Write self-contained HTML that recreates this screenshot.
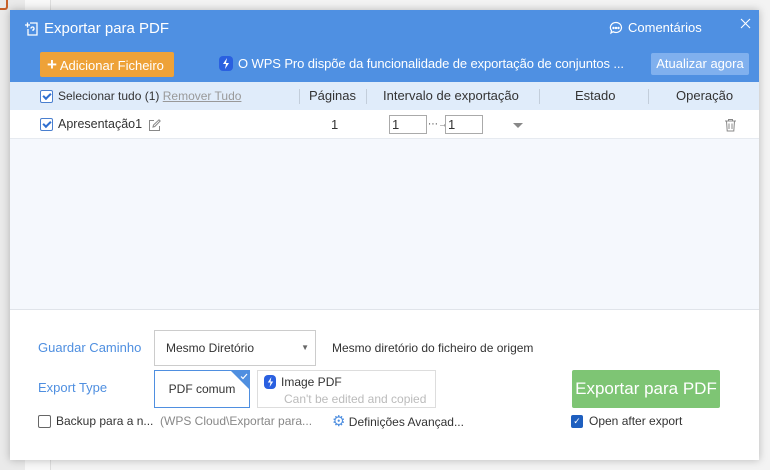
<!DOCTYPE html>
<html><head><meta charset="utf-8"><style>
*{margin:0;padding:0;box-sizing:border-box}
body{width:770px;height:470px;background:#f3f3f3;font-family:"Liberation Sans","DejaVu Sans",sans-serif;position:relative;overflow:hidden;font-size:13px;color:#333}
.abs{position:absolute;white-space:nowrap}
.dlg{left:10px;top:10px;width:749px;height:450px;background:#fff;box-shadow:0 0 8px rgba(0,0,0,.25)}
.hdr{left:0;top:0;width:749px;height:72px;background:#4f90e2;color:#fff}
.cb{width:13px;height:13px;border:1px solid #4a7fcf;border-radius:2px;background:#fff;display:inline-block}
.cb.on::after{content:"";display:block;width:6px;height:3px;border-left:2px solid #2f6fd0;border-bottom:2px solid #2f6fd0;transform:rotate(-45deg);margin:2px 0 0 2px}
.th{top:72px;height:28px;width:749px;background:#e0ecfa;line-height:28px}
.sep{top:7px;width:1px;height:15px;background:#c3cedb}
</style></head><body>
<div class="abs" style="left:0;top:0;width:25px;height:470px;background:#eaeaea"></div>
<div class="abs" style="left:25px;top:0;width:26px;height:470px;background:#f8f8f8;border-right:1px solid #ddd"></div>
<div class="abs" style="left:0;top:0;width:8px;height:10px;border-right:2px solid #c8602a;border-bottom:2px solid #c8602a;border-radius:0 0 3px 0"></div>
<div class="abs dlg">
 <div class="abs hdr">
  <svg class="abs" style="left:14px;top:11px" width="16" height="16" viewBox="0 0 16 16" fill="none" stroke="#fff" stroke-width="1.3"><path d="M6 2h7v12H4V8"/><path d="M1 4h5M3.5 1.5v5"/><path d="M7 7.5a1.5 1.5 0 1 1 2 1.4V10"/></svg>
  <div class="abs" style="left:34px;top:10px;font-size:15px">Exportar para PDF</div>
  <svg class="abs" style="left:599px;top:11px" width="14" height="14" viewBox="0 0 14 14" fill="none" stroke="#fff" stroke-width="1.2"><path d="M7 1.5a5.5 5 0 1 1-3 9.2L2 12l.5-2.5A5.5 5 0 0 1 7 1.5z"/><circle cx="4.5" cy="7" r=".6" fill="#fff"/><circle cx="7" cy="7" r=".6" fill="#fff"/><circle cx="9.5" cy="7" r=".6" fill="#fff"/></svg>
  <div class="abs" style="left:618px;top:10px;font-size:13px">Comentários</div>
  <svg class="abs" style="left:730px;top:8px" width="11" height="11" viewBox="0 0 11 11" stroke="#fff" stroke-width="1.1"><path d="M1 1l9 9M10 1l-9 9"/></svg>
  <div class="abs" style="left:30px;top:42px;width:134px;height:25px;background:#eea238;border-radius:2px;font-size:13px;line-height:25px;padding-left:7px"><b style="font-size:17px">+</b> Adicionar Ficheiro</div>
  <div class="abs" style="left:209px;top:46px;width:14px;height:15px;background:#2a60e0;border-radius:4px"></div>
  <svg class="abs" style="left:211px;top:48px" width="10" height="11" viewBox="0 0 10 11"><path d="M6 0L2 6h3l-1 5 4-6H5z" fill="#fff"/></svg>
  <div class="abs" style="left:228px;top:46px;font-size:13px;letter-spacing:-0.1px">O WPS Pro dispõe da funcionalidade de exportação de conjuntos ...</div>
  <div class="abs" style="left:641px;top:43px;width:98px;height:22px;background:#80b0ee;border-radius:2px;text-align:center;line-height:22px">Atualizar agora</div>
 </div>
 <div class="abs th">
  <span class="abs cb on" style="left:30px;top:8px"></span>
  <span class="abs" style="left:48px;font-size:12px">Selecionar tudo (1) <u style="color:#999">Remover Tudo</u></span>
  <div class="abs sep" style="left:289px"></div>
  <span class="abs" style="left:299px">Páginas</span>
  <div class="abs sep" style="left:356px"></div>
  <span class="abs" style="left:373px">Intervalo de exportação</span>
  <div class="abs sep" style="left:529px"></div>
  <span class="abs" style="left:565px">Estado</span>
  <div class="abs sep" style="left:638px"></div>
  <span class="abs" style="left:666px">Operação</span>
 </div>
 <div class="abs" style="left:0;top:100px;width:749px;height:200px;background:#f5f8fd;border-bottom:1px solid #e0e4ea">
  <div class="abs" style="left:0;top:0;width:749px;height:29px;background:#fff;border-bottom:1px solid #e6eaf0;line-height:29px">
   <span class="abs cb on" style="left:30px;top:8px"></span>
   <span class="abs" style="left:48px;font-size:12.5px">Apresentação1</span>
   <svg class="abs" style="left:138px;top:9px" width="13" height="13" viewBox="0 0 13 13" fill="none" stroke="#888" stroke-width="1"><path d="M6 1.5H1.5v10h10V7"/><path d="M5 8l.5-2L11 .8l1.2 1.2L6.8 7.5z"/></svg>
   <span class="abs" style="left:321px">1</span>
   <span class="abs" style="left:379px;top:5px;width:38px;height:19px;border:1px solid #aaa;line-height:17px;padding-left:2px">1</span>
   <span class="abs" style="left:418px;font-size:10px;color:#555">⋯→</span>
   <span class="abs" style="left:435px;top:5px;width:38px;height:19px;border:1px solid #aaa;line-height:17px;padding-left:2px">1</span>
   <div class="abs" style="left:503px;top:13px;width:0;height:0;border-left:5px solid transparent;border-right:5px solid transparent;border-top:5px solid #888"></div>
   <svg class="abs" style="left:714px;top:8px" width="13" height="14" viewBox="0 0 13 14" fill="none" stroke="#888" stroke-width="1"><path d="M1 3h11M4.5 3V1.5h4V3M2.5 3l.7 10h6.6l.7-10M5 5.5v5.5M8 5.5v5.5"/></svg>
  </div>
 </div>
 <div class="abs" style="left:28px;top:330px;color:#4f8fe0">Guardar Caminho</div>
 <div class="abs" style="left:144px;top:320px;width:162px;height:36px;border:1px solid #ccc;line-height:34px;padding-left:11px;font-size:12px">Mesmo Diretório<span style="position:absolute;right:6px;font-size:8px;color:#666">▼</span></div>
 <div class="abs" style="left:322px;top:331px;font-size:12px">Mesmo diretório do ficheiro de origem</div>
 <div class="abs" style="left:28px;top:370px;color:#4f8fe0">Export Type</div>
 <div class="abs" style="left:144px;top:360px;width:96px;height:38px;border:1px solid #4f8fe0;line-height:36px;text-align:center;font-size:12px">PDF comum
  <div class="abs" style="right:0;top:0;width:0;height:0;border-top:18px solid #4f8fe0;border-left:18px solid transparent"></div>
  <svg class="abs" style="right:1px;top:2px" width="8" height="7" viewBox="0 0 8 7" fill="none" stroke="#fff" stroke-width="1.2"><path d="M1 3.5l2 2L7 1"/></svg></div>
 <div class="abs" style="left:247px;top:360px;width:179px;height:38px;border:1px solid #ddd;font-size:12px">
  <div class="abs" style="left:6px;top:4px;width:12px;height:14px;background:#2a60e0;border-radius:4px"></div>
  <svg class="abs" style="left:8px;top:6px" width="9" height="10" viewBox="0 0 10 11"><path d="M6 0L2 6h3l-1 5 4-6H5z" fill="#fff"/></svg>
  <div class="abs" style="left:23px;top:4px">Image PDF</div>
  <div class="abs" style="left:26px;top:21px;color:#bbb">Can't be edited and copied</div>
 </div>
 <div class="abs" style="left:562px;top:360px;width:148px;height:38px;background:#7ec574;color:#fff;font-size:17px;line-height:38px;text-align:center;border-radius:2px">Exportar para PDF</div>
 <span class="abs cb" style="left:28px;top:405px;border-color:#666"></span>
 <div class="abs" style="left:46px;top:404px;font-size:12px">Backup para a n...</div>
 <div class="abs" style="left:150px;top:404px;font-size:12px;color:#888">(WPS Cloud\Exportar para...</div>
 <div class="abs" style="left:322px;top:402px;font-size:12px"><span style="color:#4f8fe0;font-size:15px">⚙</span> Definições Avançad...</div>
 <span class="abs" style="left:561px;top:405px;width:12px;height:13px;background:#1e5fbf;border-radius:2px;color:#fff;font-size:9px;text-align:center;line-height:13px">✓</span>
 <div class="abs" style="left:579px;top:404px;font-size:12px">Open after export</div>
</div>
</body></html>
